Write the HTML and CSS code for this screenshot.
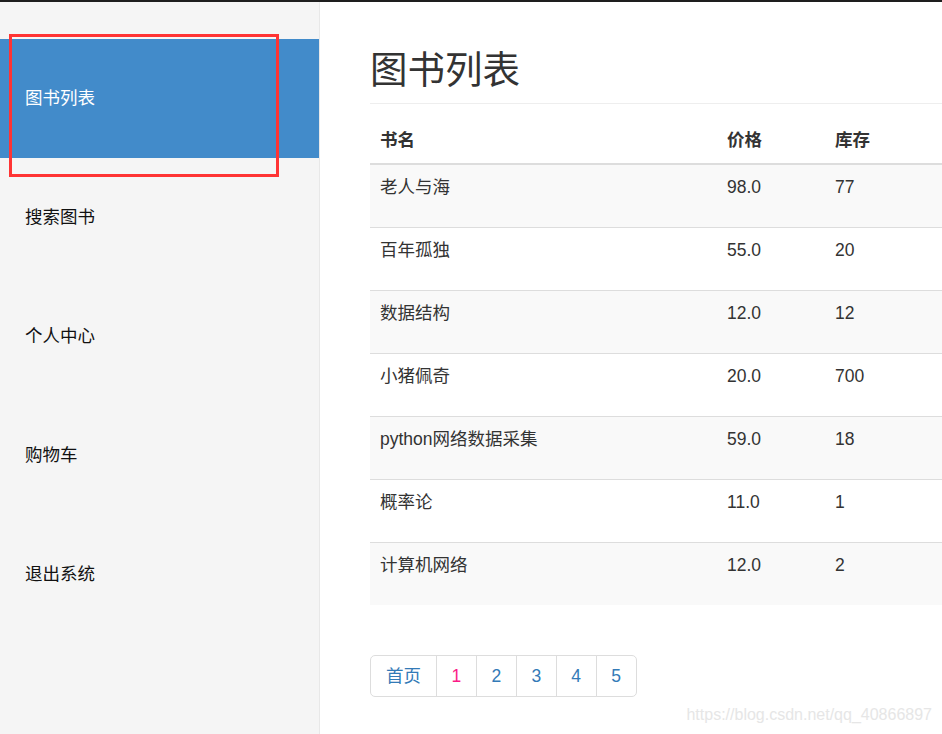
FILE: index.html
```html
<!DOCTYPE html>
<html lang="zh-CN">
<head>
<meta charset="utf-8">
<title>图书列表</title>
<link rel="stylesheet" href="styles.css">
</head>
<body>
<div class="topline"></div>
<div class="layout">
  <nav class="sidebar">
    <ul class="menu">
      <li class="menu-item active">图书列表</li>
      <li class="menu-item">搜索图书</li>
      <li class="menu-item">个人中心</li>
      <li class="menu-item">购物车</li>
      <li class="menu-item">退出系统</li>
    </ul>
  </nav>
  <main class="main">
    <h1 class="page-title">图书列表</h1>
    <table class="books">
      <thead>
        <tr><th class="c-name">书名</th><th class="c-price">价格</th><th class="c-stock">库存</th></tr>
      </thead>
      <tbody>
        <tr><td>老人与海</td><td>98.0</td><td>77</td></tr>
        <tr><td>百年孤独</td><td>55.0</td><td>20</td></tr>
        <tr><td>数据结构</td><td>12.0</td><td>12</td></tr>
        <tr><td>小猪佩奇</td><td>20.0</td><td>700</td></tr>
        <tr><td>python网络数据采集</td><td>59.0</td><td>18</td></tr>
        <tr><td>概率论</td><td>11.0</td><td>1</td></tr>
        <tr><td>计算机网络</td><td>12.0</td><td>2</td></tr>
      </tbody>
    </table>
    <ul class="pagination">
      <li><a href="#" class="first">首页</a></li>
      <li><a href="#" class="current">1</a></li>
      <li><a href="#">2</a></li>
      <li><a href="#">3</a></li>
      <li><a href="#">4</a></li>
      <li><a href="#">5</a></li>
    </ul>
  </main>
</div>
<div class="highlight-box"></div>
<div class="watermark">https://blog.csdn.net/qq_40866897</div>
</body>
</html>
```

FILE: styles.css
```css
html, body {
  margin: 0;
  padding: 0;
  height: 100%;
  overflow: hidden;
}
body {
  font-family: "Liberation Sans", "Noto Sans CJK SC", sans-serif;
  font-size: 17.5px;
  line-height: 25px;
  color: #333;
  background: #fff;
  position: relative;
}
.topline {
  height: 2px;
  background: #1e1e1e;
}
.layout {
  display: flex;
  height: 732px;
}
.sidebar {
  width: 319px;
  flex: none;
  background: #f5f5f5;
  border-right: 1px solid #e8e8e8;
}
.menu {
  list-style: none;
  margin: 0;
  padding: 37px 0 0;
}
.menu-item {
  height: 119px;
  line-height: 119px;
  padding-left: 25px;
  font-size: 17.5px;
  color: #111;
}
.menu-item.active {
  background: #428bca;
  color: #fff;
}
.main {
  flex: 1;
  padding-left: 50px;
  min-width: 0;
}
.page-title {
  margin: 48px 0 0;
  padding-bottom: 12px;
  border-bottom: 1px solid #eee;
  font-size: 37.5px;
  line-height: 41px;
  font-weight: 400;
  color: #333;
}
.books {
  width: 100%;
  border-collapse: separate;
  border-spacing: 0;
}
.books th {
  text-align: left;
  font-weight: 700;
  padding: 24px 10px 10px;
  border-bottom: 2px solid #ddd;
  vertical-align: bottom;
}
.c-name { width: 327px; }
.c-price { width: 88px; }
.books td {
  padding: 10px 10px 27px;
  border-bottom: 1px solid #ddd;
  vertical-align: top;
  color: #333;
}
.books tbody tr:last-child td {
  border-bottom: 0;
}
.books tbody tr:nth-child(odd) td {
  background: #f9f9f9;
}
.pagination {
  list-style: none;
  display: flex;
  margin: 50px 0 0;
  padding: 0;
}
.pagination li + li {
  margin-left: -1px;
}
.pagination a {
  display: block;
  padding: 7.5px 14.6px;
  line-height: 25px;
  border: 1px solid #ddd;
  color: #337ab7;
  text-decoration: none;
  background: #fff;
}
.pagination a.first {
  padding: 7.5px 15px;
}
.pagination li:first-child a {
  border-radius: 5px 0 0 5px;
}
.pagination li:last-child a {
  border-radius: 0 5px 5px 0;
}
.pagination a.current {
  color: #fb1b87;
}
.highlight-box {
  position: absolute;
  left: 9px;
  top: 34px;
  width: 264px;
  height: 137px;
  border: 3px solid #ff3434;
}
.watermark {
  position: absolute;
  right: 10px;
  top: 706px;
  font-family: "Liberation Sans", sans-serif;
  font-size: 16px;
  line-height: 18px;
  color: #e6e6e6;
}
```
